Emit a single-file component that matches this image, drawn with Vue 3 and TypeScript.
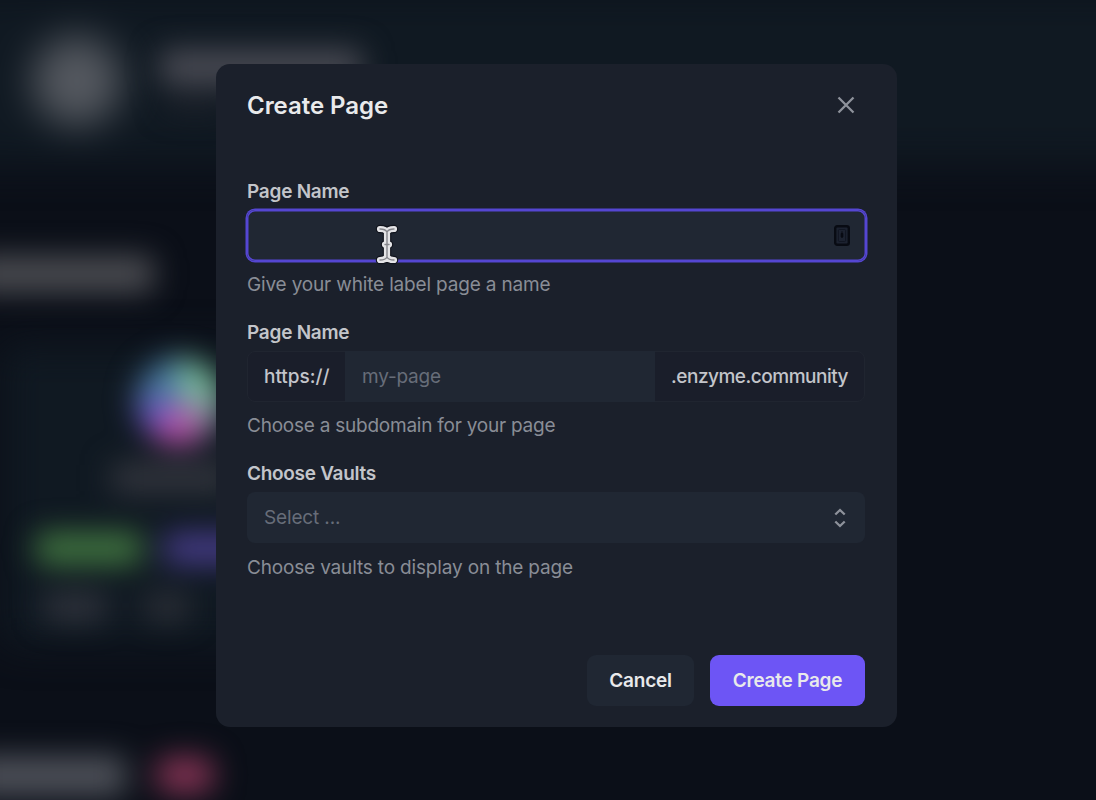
<script setup lang="ts">
import { ref } from 'vue'

const pageName = ref('')
const subdomain = ref('')
</script>

<template>
  <main class="screen">
    <svg class="backdrop" width="1096" height="800" viewBox="0 0 1096 800" aria-hidden="true">
      <defs>
        <filter id="soft" x="-200" y="-200" width="1500" height="1200" filterUnits="userSpaceOnUse" color-interpolation-filters="sRGB">
          <feGaussianBlur stdDeviation="19" />
        </filter>
        <filter id="mid" x="-200" y="-200" width="1500" height="1200" filterUnits="userSpaceOnUse" color-interpolation-filters="sRGB">
          <feGaussianBlur stdDeviation="15" />
        </filter>
      </defs>
      <rect width="1096" height="800" fill="#0b0f18" />
      <g filter="url(#soft)">
        <rect x="-100" y="-12" width="1300" height="177" fill="#101922" />
        <rect x="2" y="345" width="500" height="300" rx="12" fill="#101922" />
        <circle cx="77" cy="81" r="45" fill="#54585f" />
      </g>
      <g filter="url(#mid)">
        <rect x="160" y="50" width="202" height="34" rx="6" fill="#4c4d56" />
        <rect x="165" y="96" width="60" height="14" fill="#20232c" />
        <rect x="-30" y="256" width="184" height="36" rx="8" fill="#4d4e53" />
        <rect x="112" y="464" width="120" height="28" fill="#35373f" />
        <rect x="36" y="533" width="106" height="31" rx="8" fill="#427841" />
        <rect x="164" y="533" width="106" height="31" rx="8" fill="#463c88" />
        <rect x="44" y="594" width="62" height="26" fill="#33363f" />
        <rect x="145" y="594" width="44" height="26" fill="#2e3139" />
        <rect x="-30" y="756" width="156" height="40" rx="6" fill="#4f525a" />
        <rect x="156" y="757" width="58" height="36" rx="14" fill="#843354" />
        <path d="M179 401V358A43 43 0 0 1 222 401V419Z" fill="#79bd9c" />
        <path d="M179 401L136 401A43 43 0 0 1 179 358Z" fill="#4878a0" />
        <path d="M179 401L158 438A43 43 0 0 1 136 401Z" fill="#6658c8" />
        <path d="M179 401L209 432A43 43 0 0 1 151 434Z" fill="#bd50aa" />
        <path d="M179 401L222 401A43 43 0 0 1 204 436Z" fill="#8a8da0" />
      </g>
    </svg>

    <section class="dialog" role="dialog" aria-label="Create Page">
      <header class="head">
        <h2>Create Page</h2>
        <svg class="close" width="18" height="18" viewBox="0 0 18 18"><path d="M1.5 1.5 16.5 16.5M16.5 1.5 1.5 16.5" /></svg>
      </header>

      <div class="field first">
        <label>Page Name</label>
        <div class="control focused">
          <input v-model="pageName" type="text" aria-label="Page Name" />
          <svg class="autofill" width="16" height="21" viewBox="0 0 16 21">
            <rect x="1.2" y="1.2" width="13.6" height="18.6" rx="2" fill="#1c2230" stroke="#080b13" stroke-width="2.4" />
            <rect x="4.4" y="4.5" width="7.2" height="12" rx="1" fill="none" stroke="#111622" />
            <path d="M8 6.300V13M7.200 8.500h1.600v3.500H7.200z" fill="#080b13" stroke="#080b13" />
          </svg>
          <svg class="pointer" width="24" height="42" viewBox="0 0 24 42">
            <path class="outline" d="M5 6C8 6 11 7 12 9C13 7 16 6 19 6M12 9V34M10 21.500H14M5 37C8 37 11 36 12 34C13 36 16 37 19 37" />
            <path class="rim" d="M5 6C8 6 11 7 12 9C13 7 16 6 19 6M12 9V34M10 21.500H14M5 37C8 37 11 36 12 34C13 36 16 37 19 37" />
            <path class="core" d="M5 6C8 6 11 7 12 9C13 7 16 6 19 6M12 9V34M10 21.500H14M5 37C8 37 11 36 12 34C13 36 16 37 19 37" />
          </svg>
        </div>
        <p>Give your white label page a name</p>
      </div>

      <div class="field">
        <label>Page Name</label>
        <div class="control group">
          <span class="prefix">https://</span>
          <input v-model="subdomain" type="text" placeholder="my-page" />
          <span class="suffix">.enzyme.community</span>
        </div>
        <p class="sub">Choose a subdomain for your page</p>
      </div>

      <div class="field">
        <label class="vaults">Choose Vaults</label>
        <div class="control select">
          <span>Select ...</span>
          <svg class="sort" width="14" height="20" viewBox="0 0 14 20"><path d="M2.300 6.500 7 2l4.700 4.500M2.300 13.500 7 18l4.700-4.500" /></svg>
        </div>
        <p class="last">Choose vaults to display on the page</p>
      </div>

      <footer>
        <button class="cancel" type="button">Cancel</button>
        <button class="create" type="button">Create Page</button>
      </footer>
    </section>
  </main>
</template>

<style>
body {
  background: #0b0f18;
}
</style>

<style scoped>
.screen {
  position: relative;
  width: 1096px;
  height: 800px;
  overflow: hidden;
  box-sizing: border-box;
  padding: 64px 199px 73px 216px;
  font-family: Inter, "Liberation Sans", sans-serif;
}
.screen *,
.screen *::before {
  box-sizing: border-box;
}
.backdrop {
  position: absolute;
  inset: 0;
}
.dialog {
  position: relative;
  display: flex;
  flex-direction: column;
  height: 663px;
  padding: 25px 32px 21px 31px;
  border-radius: 14px;
  background: #1b202b;
}
.head {
  display: flex;
  justify-content: space-between;
  align-items: center;
  height: 32px;
  padding-right: 10px;
}
h2 {
  margin: 0;
  padding-top: 1px;
  font-size: 24px;
  font-weight: 600;
  line-height: 32px;
  letter-spacing: -0.05px;
  color: #e9eaec;
}
.close path,
.sort path {
  fill: none;
  stroke: #8e929b;
  stroke-width: 2.3;
}
.field {
  display: flex;
  flex-direction: column;
  height: 141px;
}
.first {
  margin-top: 58px;
}
label {
  height: 31px;
  font-size: 19px;
  font-weight: 600;
  line-height: 26px;
  letter-spacing: -0.25px;
  color: #c3c5ca;
}
.vaults {
  letter-spacing: -0.3px;
}
.control {
  position: relative;
  display: flex;
  align-items: center;
  height: 51px;
  border-radius: 8px;
  background: #202733;
}
.focused {
  width: 619px;
  box-shadow: 0 0 0 1.5px #5546d2, inset 0 0 0 1.5px #5546d2;
  padding-right: 16px;
}
input {
  flex: 1;
  min-width: 0;
  height: 100%;
  padding: 0 17px;
  border: 0;
  outline: 0;
  background: transparent;
  font: 400 19px Inter, sans-serif;
  letter-spacing: -0.2px;
  color: #c3c5ca;
}
input::placeholder {
  color: #676d79;
  opacity: 1;
}
.pointer {
  position: absolute;
  left: 128px;
  top: 13px;
}
.pointer path {
  fill: none;
  stroke-linecap: round;
  stroke-linejoin: round;
}
.outline {
  stroke: #10131c;
  stroke-width: 8.5;
}
.rim {
  stroke: #e4e4e7;
  stroke-width: 6.2;
}
.core {
  stroke: #85868c;
  stroke-width: 1.4;
}
p {
  margin: 11px 0 0;
  font-size: 19px;
  font-weight: 430;
  line-height: 26px;
  letter-spacing: -0.165px;
  color: #898d96;
}
.sub {
  letter-spacing: -0.235px;
}
.last {
  margin-top: 12px;
}
.group {
  border: 1px solid #202530;
  background: #1a1e2a;
}
.group input {
  height: 51px;
  background: #202733;
}
.prefix,
.suffix {
  font-size: 19px;
  font-weight: 500;
  color: #c3c5ca;
}
.prefix {
  width: 97px;
  padding-left: 16px;
}
.suffix {
  width: 209px;
  padding-left: 16px;
  letter-spacing: -0.49px;
}
.select {
  justify-content: space-between;
  padding: 0 18px 0 17px;
  font-size: 19px;
  letter-spacing: -0.15px;
  color: #676d79;
}
footer {
  display: flex;
  justify-content: flex-end;
  gap: 16px;
  margin-top: auto;
}
button {
  height: 51px;
  padding: 0;
  border: 0;
  border-radius: 9px;
  font: 600 19px Inter, sans-serif;
  letter-spacing: -0.25px;
  color: #e8e9eb;
}
.cancel {
  width: 107px;
  background: #202733;
}
.create {
  width: 155px;
  background: #6d55f5;
}
</style>
